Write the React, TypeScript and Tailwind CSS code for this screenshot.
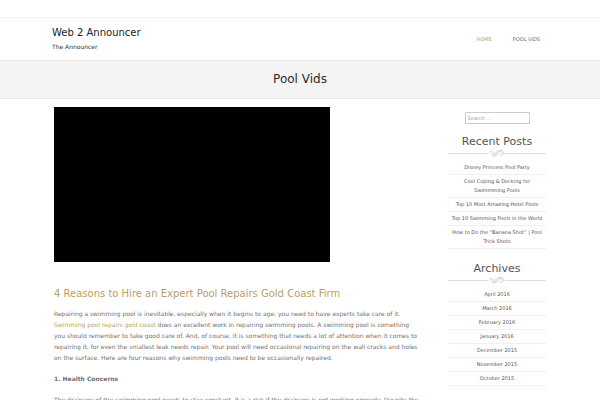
import type { ReactNode } from "react";

const recentPosts = [
  "Disney Princess Pool Party",
  "Cool Coping & Decking for Swimmming Pools",
  "Top 10 Most Amazing Hotel Pools",
  "Top 10 Swimming Pools in the World",
  "How to Do the “Banana Shot” | Pool Trick Shots",
];

const archives = [
  "April 2016",
  "March 2016",
  "February 2016",
  "January 2016",
  "December 2015",
  "November 2015",
  "October 2015",
];

function Flourish() {
  return (
    <div className="-my-px flex items-center">
      <span className="h-px flex-1 bg-[#dedede]" />
      <svg viewBox="0 0 16 8" className="h-2 w-4" fill="none" stroke="#cdcdcd" strokeWidth="0.9" strokeLinecap="round">
        <path d="M1 3C1 1.800 2.800 2 3 3.200C3.200 4.500 5 4.800 6.500 3.800C8 2.800 9.500 0.800 12 1.200" />
        <path d="M2 5C3 6.800 5.500 6.600 7.500 4.800C9 3.400 10 2.300 12 2.600C13.500 2.900 13.500 4.200 12.500 4.300" />
        <path d="M4.500 7C6.500 7.200 8 6 9.500 4.500" />
        <path d="M12 1.200C14.500 1.500 15.500 3.500 14.500 5C13.700 6.300 12 6.600 11 6.200" />
      </svg>
      <span className="h-px flex-1 bg-[#dedede]" />
    </div>
  );
}

function Widget({ title, items }: { title: string; items: string[] }) {
  return (
    <section className="mb-3">
      <h3 className="text-center text-[11px] leading-4 text-[#555]">{title}</h3>
      <Flourish />
      <ul className="pt-[5px]">
        {items.map((item) => (
          <li
            key={item}
            className="border-b border-[#f0f0f0] py-[2px] text-center text-[5px] leading-[9px] text-[#555]"
          >
            <a href="#">{item}</a>
          </li>
        ))}
      </ul>
    </section>
  );
}

function Container({ children, className }: { children: ReactNode; className: string }) {
  return <div className={`mx-auto w-full max-w-[500px] ${className}`}>{children}</div>;
}

export default function App() {
  return (
    <div className="h-screen overflow-hidden bg-white font-['DejaVu_Sans',sans-serif] text-[#707070]">
      {/* Top bar */}
      <div className="h-[18px] border-b border-[#eee]" />

      <header>
        <Container className="flex h-[42px] items-center justify-between px-[2px]">
          <div>
            <a href="#" className="block text-[10px] leading-4 text-[#222]">
              Web 2 Announcer
            </a>
            <p className="text-[6px] leading-3 text-[#333]">The Announcer</p>
          </div>
          <nav className="flex gap-[21px] pr-2 text-[5px] leading-3 uppercase">
            <a href="#" className="text-[#b99f62]">
              Home
            </a>
            <a href="#" className="text-[#666]">
              Pool Vids
            </a>
          </nav>
        </Container>
      </header>

      <div className="border-y border-[#e6e6e6] bg-[#f4f4f4] py-[9px]">
        <h1 className="text-center text-[12px] leading-[19px] text-[#2b2b2b]">Pool Vids</h1>
      </div>

      <Container className="flex justify-between px-1 pt-2">
        <main className="w-[366px]">
          <div className="h-[155px] w-[276px] bg-black" />
          <article className="pt-6 text-[6px] leading-[11px]">
            <h2 className="mb-[6px] text-[10px] leading-4 text-[#b99f62]">
              4 Reasons to Hire an Expert Pool Repairs Gold Coast Firm
            </h2>
            <p className="mb-[10px]">
              Repairing a swimming pool is inevitable, especially when it begins to age; you need to have experts take
              care of it.{" "}
              <a href="#" className="text-[#b99f62]">
                Swimming pool repairs gold coast
              </a>{" "}
              does an excellent work in repairing swimming pools. A swimming pool is something you should remember to
              take good care of. And, of course, it is something that needs a lot of attention when it comes to
              repairing it, for even the smallest leak needs repair. Your pool will need occasional repairing on the
              wall cracks and holes on the surface. Here are four reasons why swimming pools need to be occasionally
              repaired.
            </p>
            <p className="mb-[10px]">
              <strong>1. Health Concerns</strong>
            </p>
            <p>
              The drainage of the swimming pool needs to stay constant. It is a risk if the drainage is not working
              properly. Despite the
            </p>
          </article>
        </main>

        <aside className="w-[98px]">
          <form className="mb-[10px] flex justify-center pt-[5px]">
            <input
              type="search"
              aria-label="Search"
              placeholder="Search …"
              className="h-3 w-[65px] border border-[#ccc] px-[2px] text-[5px] placeholder:text-[#999]"
            />
          </form>
          <Widget title="Recent Posts" items={recentPosts} />
          <Widget title="Archives" items={archives} />
        </aside>
      </Container>
    </div>
  );
}
